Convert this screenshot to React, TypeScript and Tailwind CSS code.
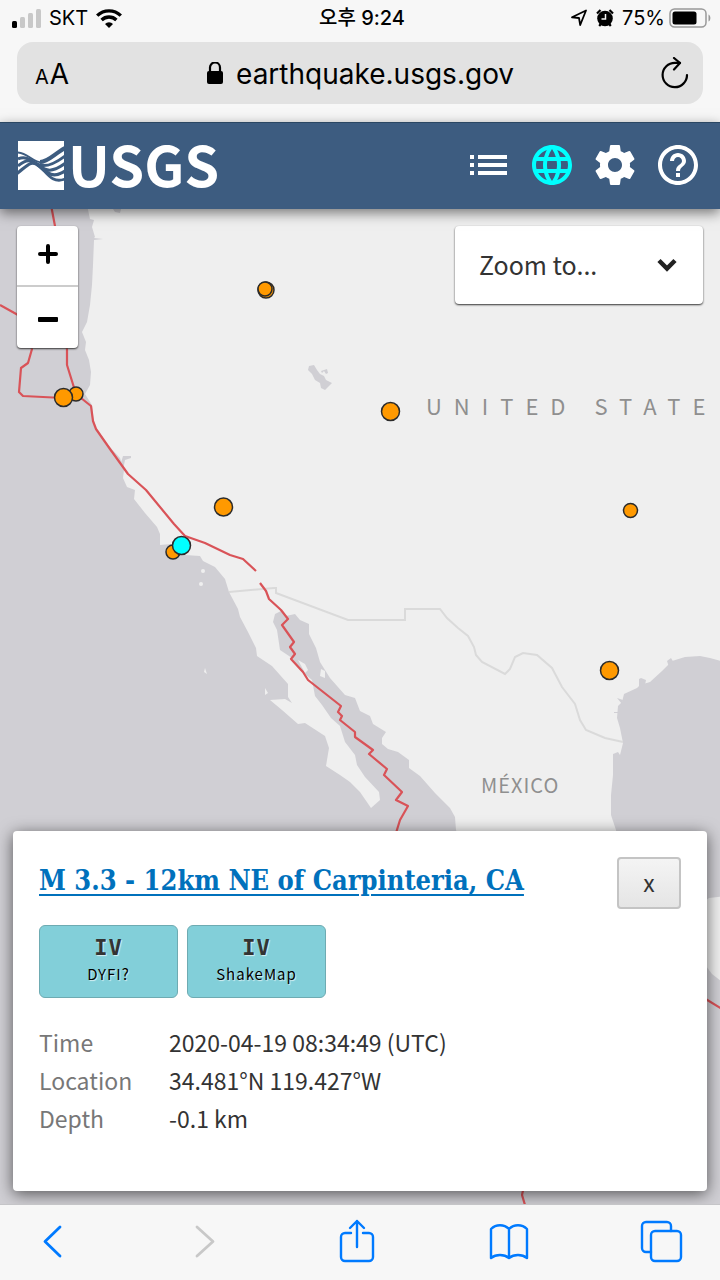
import React from "react";
import { MdHelpOutline, MdLanguage } from "react-icons/md";

const sans = "font-['Noto_Sans_CJK_KR','Noto_Sans',sans-serif]";

const markers = [
  { x: 266, y: 290, r: 8, color: "#ff9900" },
  { x: 265, y: 289, r: 7, color: "#ff9900" },
  { x: 76, y: 394, r: 7, color: "#ff9900" },
  { x: 63.5, y: 397.5, r: 9, color: "#ff9900" },
  { x: 390.5, y: 411.5, r: 9, color: "#ff9900" },
  { x: 223.5, y: 507, r: 9, color: "#ff9900" },
  { x: 630.5, y: 510.5, r: 7, color: "#ff9900" },
  { x: 173, y: 552, r: 7, color: "#ff9900" },
  { x: 181.5, y: 545.5, r: 9, color: "#00ffff" },
  { x: 609.5, y: 670.5, r: 9, color: "#ff9900" }
];

const intensities = [
  { value: "IV", label: "DYFI?" },
  { value: "IV", label: "ShakeMap" }
];

const details = [
  { label: "Time", value: "2020-04-19 08:34:49 (UTC)" },
  { label: "Location", value: "34.481°N 119.427°W" },
  { label: "Depth", value: "-0.1 km" }
];

function StatusBar() {
  return (
    <div className="grid grid-cols-3 items-center h-9 pl-3 pr-2 text-xl leading-6 text-black font-['Inter','Noto_Sans_CJK_KR',sans-serif]">
      <div className="flex items-center gap-2">
        <svg width="29" height="19" viewBox="0 0 29 19" aria-hidden="true">
          <rect x="0" y="12" width="5" height="7" rx="1.5" fill="#000" />
          <rect x="8" y="8" width="5" height="11" rx="1.5" fill="#c8c8c8" />
          <rect x="16" y="4" width="5" height="15" rx="1.5" fill="#c8c8c8" />
          <rect x="24" y="0" width="5" height="19" rx="1.5" fill="#c8c8c8" />
        </svg>
        <span>SKT</span>
        <svg width="26" height="19" viewBox="0 0 26 19" fill="none" stroke="#000" strokeWidth="3.4" aria-hidden="true">
          <path d="M1.2 6.6a17 17 0 0 1 23.6 0" />
          <path d="M5.6 11a10.700 10.700 0 0 1 14.800 0" />
          <path d="M13 19l-4-4a5.600 5.600 0 0 1 8 0z" fill="#000" stroke="none" />
        </svg>
      </div>
      <div className="text-center font-medium">오후 9:24</div>
      <div className="flex items-center justify-end">
        <svg width="18" height="18" viewBox="0 0 18 18" fill="none" stroke="#000" strokeWidth="1.800" strokeLinejoin="round" aria-hidden="true">
          <path d="M2 8.300L16 1.500L10.200 16L9 9z" />
        </svg>
        <svg className="ml-2 mr-2" width="18" height="18" viewBox="0 0 18 18" aria-hidden="true">
          <circle cx="9" cy="9.500" r="7.800" fill="#000" />
          <path d="M1 4.500L4.500 1M17 4.500L13.500 1M3.200 17l2-2.500M14.800 17l-2-2.500" stroke="#000" strokeWidth="2.200" />
          <path d="M9.500 5v5H5.500" fill="none" stroke="#f7f7f7" strokeWidth="1.500" />
        </svg>
        <span>75%</span>
        <svg className="ml-1" width="43" height="20" viewBox="0 0 43 20" aria-hidden="true">
          <rect x="1" y="1" width="36" height="18" rx="4.500" fill="none" stroke="#999" strokeWidth="1.500" />
          <rect x="3.500" y="3.500" width="24" height="13" rx="2.500" fill="#000" />
          <path d="M39.500 6.500c2.500 1 2.500 6 0 7z" fill="#999" />
        </svg>
      </div>
    </div>
  );
}

function AddressBar() {
  return (
    <div className="px-[17px] pt-[6px] pb-[18px]">
      <div className="flex items-center justify-between h-[62px] pt-[2px] pl-[18px] pr-3 rounded-2xl bg-[#e2e2e2] text-black font-['Inter',sans-serif]">
        <button type="button" aria-label="Text size" className="flex items-baseline gap-px leading-8">
          <span className="text-xl">A</span>
          <span className="text-[28px]">A</span>
        </button>
        <div className="flex items-center gap-3 pr-2">
          <svg width="18" height="24" viewBox="0 0 18 24" aria-hidden="true">
            <rect x="1" y="9" width="16" height="13" rx="2" fill="#000" />
            <path d="M4 10V5.500a5 5 0 0 1 10 0V10" fill="none" stroke="#000" strokeWidth="2.200" />
          </svg>
          <span className="text-[28px] leading-8">earthquake.usgs.gov</span>
        </div>
        <button type="button" aria-label="Reload">
          <svg width="32" height="34" viewBox="0 0 32 34" fill="none" stroke="#000" strokeWidth="2.200" strokeLinecap="round" strokeLinejoin="round">
            <path d="M28 18A12.200 12.200 0 1 1 16 5.800H21" />
            <path d="M15 1L21 6L15 12.500" />
          </svg>
        </button>
      </div>
    </div>
  );
}

function SiteHeader() {
  return (
    <header className="relative z-10 flex items-center justify-between h-[87px] pl-[18px] pr-[11px] pb-[2px] bg-[#3d5c80] border-t border-[#2b4763] shadow-[0_4px_12px_rgba(0,0,0,0.5)]">
      <a href="#home" aria-label="USGS" className="flex items-center gap-1 text-white">
        <svg width="46" height="49" viewBox="0 0 46 49" fill="none" stroke="#3d5c80" aria-hidden="true">
          <path d="M0 0H46V49H0z" fill="#fff" stroke="none" />
          <path d="M0 11.500C10 12 15 21.500 24 21.500" strokeWidth="1.800" />
          <path d="M22 21C30 21 36 13 47 7" strokeWidth="4.200" />
          <path d="M0 18C9 14 14 21 20 23.500S34 25 47 15" strokeWidth="3" />
          <path d="M0 25C9 17 14 19 21 24.500S34 32 47 22.500" strokeWidth="3" />
          <path d="M-1 32.500C9 25 13 18 21 25S35 38 47 30" strokeWidth="3.200" />
          <path d="M18 23C27 27 32 44 47 38" strokeWidth="2.800" />
        </svg>
        <span className="pb-1 text-[56px] leading-[60px] font-bold font-['Noto_Sans_CJK_KR','Liberation_Sans',sans-serif]">USGS</span>
      </a>
      <nav className="flex items-center text-white">
        <button type="button" aria-label="List" className="w-[63px] h-16 flex items-center justify-center">
          <svg width="48" height="48" viewBox="0 0 48 48" fill="currentColor">
            <path d="M5 14h4v4H5zM13 14h29v4H13zM5 22h4v4H5zM13 22h29v4H13zM5 30h4v4H5zM13 30h29v4H13z" />
          </svg>
        </button>
        <button type="button" aria-label="Map" className="w-[63px] h-16 flex items-center justify-center text-[#00ffff]">
          <MdLanguage size={48} />
        </button>
        <button type="button" aria-label="Settings" className="w-[63px] h-16 flex items-center justify-center">
          <svg width="48" height="48" viewBox="0 0 24 24" fill="currentColor">
            <path d="M19.430 12.980c.04-.32.07-.64.07-.98s-.03-.66-.07-.98l2.110-1.650c.19-.15.24-.42.12-.64l-2-3.460c-.12-.22-.39-.3-.61-.22l-2.490 1c-.52-.4-1.080-.73-1.690-.98l-.38-2.650C14.460 2.180 14.250 2 14 2h-4c-.25 0-.46.18-.49.42l-.38 2.650c-.61.25-1.170.59-1.690.98l-2.490-1c-.23-.09-.49 0-.61.22l-2 3.460c-.13.22-.07.49.12.64l2.110 1.650c-.04.32-.07.65-.07.98s.03.66.07.98l-2.110 1.650c-.19.15-.24.42-.12.64l2 3.460c.12.22.39.3.61.22l2.490-1c.52.4 1.080.73 1.690.98l.38 2.650c.03.24.24.42.49.42h4c.25 0 .46-.18.49-.42l.38-2.650c.61-.25 1.170-.59 1.690-.98l2.490 1c.23.09.49 0 .61-.22l2-3.460c.12-.22.07-.49-.12-.64l-2.110-1.650zM12 15.500c-1.930 0-3.500-1.570-3.500-3.500s1.570-3.500 3.500-3.500 3.500 1.570 3.500 3.500-1.570 3.500-3.500 3.500z" />
          </svg>
        </button>
        <button type="button" aria-label="Help" className="w-[63px] h-16 flex items-center justify-center">
          <MdHelpOutline size={48} />
        </button>
      </nav>
    </header>
  );
}

function MapCanvas() {
  return (
    <svg
      className="absolute inset-0 w-full h-full"
      viewBox="0 209 720 995"
      preserveAspectRatio="xMinYMin slice"
      role="img"
      aria-label="Earthquake map"
    >
      {/* Land */}
      <g fill="#efefef">
        <path d="M87 205L90 219L94 220L92 227L95 237L94 238L103 239L94 240L93 265L92 285L90 305L87 322L82 332L86 342L85 350L89 360L91 372L90 385L85 394L92 405L94 425L108 445L120 458L124 470L123 478L127 487L135 490L134 499L145 513L157 527L160 534L160 545L171 544L185 555L200 556L203 561L215 567L225 579L229 592L238 609L240 617L248 632L256 648L257 656L272 666L288 684L288 697L292 703L285 699L270 700L282 710L298 724L305 723L325 736L329 748L326 766L340 775L350 782L360 792L371 808L380 800L379 792L365 777L357 765L355 755L345 742L340 726L331 718L322 705L315 696L312 680L300 670L292 658L280 650L277 630L273 622L275 614L281 611L286 616L295 614L300 620L309 624L309 634L316 648L320 662L330 678L345 695L355 698L360 711L370 716L373 724L386 732L382 738L382 744L388 749L398 752L409 760L409 768L420 776L435 793L450 808L455 817L456 830L480 900L620 900L616 830L611 815L611 795L613 775L613 754L618 752L620 755L623 743L620 728L617 718L618 706L622 702L624 694L637 688L640 685L650 682L662 671L672 661L685 657L700 656L710 658L721 661V205z" />
        <path d="M700 905L709 898L725 896V984L712 974L700 958z" />
        <circle cx="203" cy="571" r="2" />
        <circle cx="201" cy="584" r="2" />
        <path d="M205 668l2 6l-3-2zM265 688l3 5l-3 2zM298 660l7 4l3 6l-3 3zM321 669l4 2v7l-5-2z" />
      </g>
      {/* Inland and coastal water */}
      <g fill="#d0cfd4">
        <path d="M309 366l5-1l3 5l3 4l4 2l2 4l6 3l-4 4l-3 3l-4-2l-1-5l-5-3l-3-6l-4-4zM321 371l6-2l1 4l-2 1l-2-3l-2 2z" />
        <path d="M113 209h8l-1 4l-5-1zM123 456h8v2l-6 2l-2 10l-3-4zM639 679l2-1l5 2l-1 5l-6 3zM667 661l4-3l3 5l-5 4zM617 698l6 2l-1 4zM614 712h5v1h-5z" />
      </g>
      <path
        d="M229 592L274 588L276 588L276 593L348 620L405 620L405 609L440 609L447 618L458 628L468 636L474 647L476 655L482 662L505 674L510 669L515 657L523 653L537 655L552 668L562 687L575 704L580 720L586 730L605 738L623 742"
        fill="none"
        stroke="#dadada"
        strokeWidth="2"
      />
      {/* Plate boundaries */}
      <g fill="none" stroke="#d95358" strokeWidth="2.200" strokeLinejoin="round">
        <path d="M51 205L55 226L67 350L67 365L76 394L91 406L93 421L96 429L110 449L128 474L146 490L174 524L185 536L205 543L230 555L243 559L256 571" />
        <path d="M0 305L18 315L32 349L28 363L21 368L19 392L23 396L63 398" />
        <path d="M260 583L266 591L269 599L281 610L288 619L282 625L294 642L290 647L295 654L291 659L303 672L308 680L341 706L338 712L342 716L340 720L355 732L355 737L373 750L369 754L387 769L384 775L402 792L396 800L408 806L400 820L396 833" />
        <path d="M704 998L722 1009M524 1186L522 1195L525 1205" />
      </g>
      <g fill="#8f8f8f" className={sans}>
        <text x="426" y="415" fontSize="22" letterSpacing="12">UNITED STATE</text>
        <text x="481" y="793" fontSize="20" letterSpacing="1">MÉXICO</text>
      </g>
      {markers.map((marker, index) => (
        <circle key={index} cx={marker.x} cy={marker.y} r={marker.r} fill={marker.color} stroke="#2b2b2b" strokeWidth="1.500" />
      ))}
    </svg>
  );
}

function MapControls() {
  return (
    <div className="relative flex items-start justify-between px-[17px]">
      <div className="flex flex-col w-[61px] rounded-sm overflow-hidden bg-white shadow-[0_1px_2px_#333]">
        <button type="button" aria-label="Zoom in" className="flex items-center justify-center h-[61px] pb-1 border-b-2 border-[#ccc]">
          <svg width="20" height="20" viewBox="0 0 20 20" stroke="#000" strokeWidth="4" strokeLinecap="round">
            <path d="M2 10H18M10 2V18" />
          </svg>
        </button>
        <button type="button" aria-label="Zoom out" className="flex items-center justify-center h-[61px] pt-1">
          <svg width="20" height="20" viewBox="0 0 20 20">
            <rect x="0" y="7" width="20" height="5" rx="1" fill="#000" />
          </svg>
        </button>
      </div>
      <div className="relative">
        <select
          aria-label="Zoom to"
          className={`appearance-none w-[248px] h-[78px] pl-6 pr-16 rounded-sm bg-white text-[25px] text-[#333] shadow-[0_1px_2px_#333] ${sans}`}
        >
          <option>Zoom to...</option>
        </select>
        <svg className="absolute right-[26px] top-8 pointer-events-none" width="20" height="14" viewBox="0 0 20 14" aria-hidden="true">
          <path d="M2 2.500L10 10.500L18 2.500" fill="none" stroke="#222" strokeWidth="4.500" />
        </svg>
      </div>
    </div>
  );
}

function EventCard() {
  return (
    <article className={`relative mx-[13px] px-[26px] pt-[26px] pb-[54px] rounded-sm bg-white shadow-[0_3px_16px_rgba(0,0,0,0.6)] ${sans}`}>
      <div className="flex items-start justify-between">
        <h1 className="text-[27px] leading-[48px] font-bold font-['DejaVu_Serif_Condensed','DejaVu_Serif',serif]">
          <a href="#event" className="text-[#0071bc] underline decoration-2 underline-offset-4">
            M 3.3 - 12km NE of Carpinteria, CA
          </a>
        </h1>
        <button
          type="button"
          aria-label="Close"
          className="w-16 h-[52px] pb-[2px] rounded-sm border-2 border-[#c4c4c4] bg-linear-to-b from-[#f4f4f4] to-[#e5e5e5] text-[23px] leading-8 text-[#333]"
        >
          x
        </button>
      </div>
      <div className="flex gap-[9px] mt-4">
        {intensities.map((item) => (
          <a
            key={item.label}
            href="#intensity"
            className="flex flex-col items-center justify-center w-[139px] h-[73px] pb-1 rounded-md border border-[#6eabb2] bg-[#82cfd9] text-shadow-[1px_1px_1px_rgba(255,255,255,0.7)]"
          >
            <strong className="text-[22px] leading-7 tracking-[1px] text-[#333] font-['DejaVu_Sans_Mono',monospace]">{item.value}</strong>
            <span className="text-[15px] leading-6 tracking-[1px] text-black">{item.label}</span>
          </a>
        ))}
      </div>
      <dl className="grid grid-cols-[130px_1fr] mt-[25px] text-[23px] leading-[38px]">
        {details.map((item) => (
          <React.Fragment key={item.label}>
            <dt className="text-[#777]">{item.label}</dt>
            <dd className="text-[#333]">{item.value}</dd>
          </React.Fragment>
        ))}
      </dl>
    </article>
  );
}

function Toolbar() {
  const button = "w-11 h-11 flex items-center justify-center";

  return (
    <nav className="flex items-center justify-between h-[76px] pl-[31px] pr-[37px] pb-1 bg-[#f7f7f7] border-t border-[#c5c5c8] text-[#007aff]">
      <button type="button" aria-label="Back" className={button}>
        <svg width="44" height="44" viewBox="0 0 44 44" fill="none" stroke="currentColor" strokeWidth="2.800" strokeLinecap="round" strokeLinejoin="round">
          <path d="M29 8L14 22.500L29 37" />
        </svg>
      </button>
      <button type="button" aria-label="Forward" disabled className={`${button} text-[#c8c8c8]`}>
        <svg width="44" height="44" viewBox="0 0 44 44" fill="none" stroke="currentColor" strokeWidth="2.800" strokeLinecap="round" strokeLinejoin="round">
          <path d="M14 8L30 22.500L14 37" />
        </svg>
      </button>
      <button type="button" aria-label="Share" className={button}>
        <svg width="44" height="44" viewBox="0 0 44 44" fill="none" stroke="currentColor" strokeWidth="2.400" strokeLinecap="round" strokeLinejoin="round">
          <path d="M16 14H10a4 4 0 0 0-4 4V38a4 4 0 0 0 4 4H34a4 4 0 0 0 4-4V18a4 4 0 0 0-4-4H28" />
          <path d="M22 28V2M15 9L22 2L29 9" />
        </svg>
      </button>
      <button type="button" aria-label="Bookmarks" className={button}>
        <svg width="44" height="44" viewBox="0 0 44 44" fill="none" stroke="currentColor" strokeWidth="2.400" strokeLinecap="round" strokeLinejoin="round">
          <path d="M22 39C17 35 9 35 4 39V10C9 5 17 5 22 10C27 5 35 5 40 10V39C35 35 27 35 22 39V10" />
        </svg>
      </button>
      <button type="button" aria-label="Tabs" className={button}>
        <svg width="44" height="44" viewBox="0 0 44 44" fill="none" stroke="currentColor" strokeWidth="2.400" strokeLinecap="round" strokeLinejoin="round">
          <path d="M12 33H7a4 4 0 0 1-4-4V7a4 4 0 0 1 4-4H28a4 4 0 0 1 4 4V12" />
          <rect x="12" y="12" width="30" height="30" rx="4" />
        </svg>
      </button>
    </nav>
  );
}

export default function App() {
  return (
    <div className="flex flex-col min-h-screen bg-[#f7f7f7]">
      <StatusBar />
      <AddressBar />
      <SiteHeader />
      <main className="relative flex flex-col flex-1 justify-between gap-8 pt-[17px] pb-[13px] overflow-hidden bg-[#d0cfd4]">
        <MapCanvas />
        <MapControls />
        <EventCard />
      </main>
      <Toolbar />
    </div>
  );
}
